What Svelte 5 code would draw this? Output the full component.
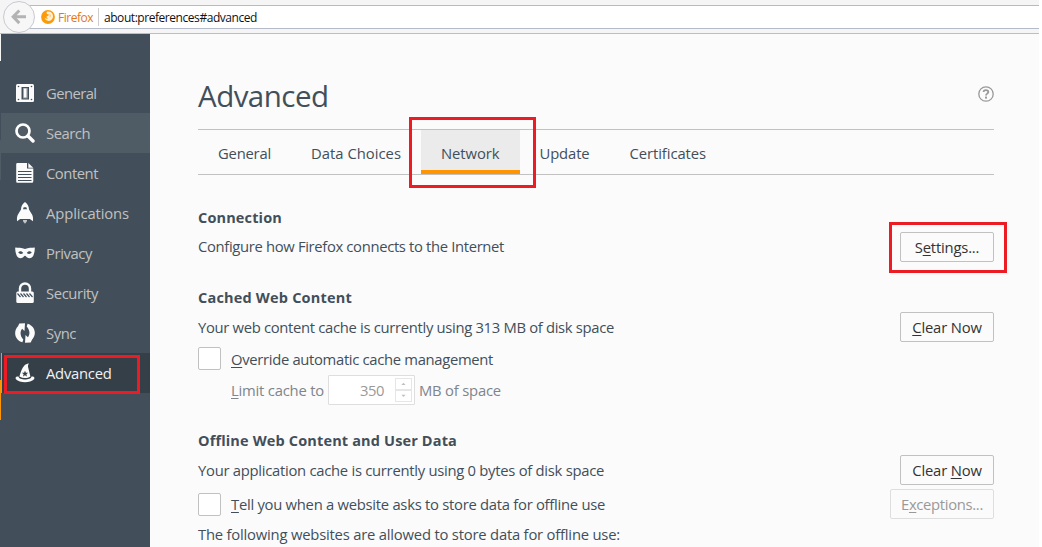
<script>
  const nav = [
    { id: 'general', label: 'General', w: 50.5 },
    { id: 'search', label: 'Search', w: 44 },
    { id: 'content', label: 'Content', w: 52 },
    { id: 'applications', label: 'Applications', w: 83 },
    { id: 'privacy', label: 'Privacy', w: 46 },
    { id: 'security', label: 'Security', w: 52 },
    { id: 'sync', label: 'Sync', w: 30 },
    { id: 'advanced', label: 'Advanced', w: 65.5 }
  ];
  const tabs = [
    { label: 'General', w: 53 },
    { label: 'Data Choices', w: 90 },
    { label: 'Network', w: 58.5 },
    { label: 'Update', w: 50 },
    { label: 'Certificates', w: 76.5 }
  ];

  // Tracks a line of text so that it fills the given width.
  function fit(node, width) {
    const natural = node.getBoundingClientRect().width;
    node.style.letterSpacing = `${(width - natural) / node.textContent.length}px`;
  }
</script>

<div class="window">
  <header class="toolbar">
    <div class="urlbar">
      <svg class="fox" viewBox="0 0 14 14" width="14" height="14">
        <circle cx="7" cy="7" r="6.900" fill="#fb9b0a" />
        <path d="M6 1.700C8.500.900 11.600 2.500 12 5.500c.4 3-1.700 5.400-4.300 5.400-2.100 0-3.800-1.300-4.100-3.300 1 1.300 2.600 1.500 3.600.8-1.100-.2-1.700-.9-1.600-1.900l2-.9.2-1-1.700-.6C5.500 3.300 5.500 2.500 6 1.700z" fill="#fff0d6" />
        <path d="M8.500 3.500c1.300 1 1.500 3 .3 4.200.1-1.500-.1-2.900-.3-4.200z" fill="#f8b04a" />
      </svg>
      <span class="brand" use:fit={35}>Firefox</span>
      <span class="split"></span>
      <span class="url" use:fit={153}>about:preferences#advanced</span>
    </div>
    <div class="back">
      <svg viewBox="0 0 16 16" width="16" height="16">
        <path d="M8.300 1.500L2.200 7.800l6.100 6.300M2.500 7.800H15" fill="none" stroke="#b3b3b3" stroke-width="3" />
      </svg>
    </div>
  </header>

  <div class="page">
    <div class="edge"><i class="e1"></i><i class="e2"></i><i class="e3"></i><i class="e4"></i><i class="e5"></i></div>
    <nav>
      {#each nav as item}
        <div class="item {item.id}">
          <svg viewBox="0 0 20 22" width="20" height="22" fill="#fbfbfb">
            {#if item.id === 'general'}
              <rect x="1" y="2" width="18" height="18" rx="1.500" />
              <path d="M6.500 5h7.500v12.500H6.500z" fill="#424f5a" />
              <path d="M8 6h4.800v10.500H8z" fill="#8c949b" /><path d="M8.800 6.500h2.700v9H8.800z" />
              <g fill="#424f5a"><circle cx="3.500" cy="4.500" r=".8" /><circle cx="16.500" cy="4.500" r=".8" /><circle cx="3.500" cy="17.500" r=".8" /><circle cx="16.500" cy="17.500" r=".8" /></g>
            {:else if item.id === 'search'}
              <circle cx="8" cy="9" r="6.500" fill="none" stroke="#fff" stroke-width="2.700" />
              <path d="M13 14l5 5" stroke="#fff" stroke-width="3.400" stroke-linecap="round" />
            {:else if item.id === 'content'}
              <path d="M2.500 1h9.500v5.500h6.300v12.800a1.500 1.500 0 0 1-1.500 1.500H2.500a1.300 1.300 0 0 1-1.300-1.500V2.300A1.300 1.300 0 0 1 2.500 1z" />
              <path d="M13.300 1l5 4.700h-5z" />
              <path d="M3 9.500h13.500M3 12.500h13.500M3 15.500h13.500M3 18.500h13.500" stroke="#424f5a" stroke-width="1.200" />
            {:else if item.id === 'applications'}
              <path d="M10 0c2.500 1.700 4 4.500 4 7.500l3.300 5.500c.8 2 .9 4 .6 6.200l-3-2.200H5.100l-3 2.200c-.3-2.200-.2-4.200.6-6.200L6 7.500C6 4.500 7.500 1.700 10 0z" />
              <path d="M8 7.300h4l-.7-2H8.700z" fill="#424f5a" />
              <path d="M8 18h4c.3 1.500-1 2.300-2 3.800C9 20.300 7.700 19.500 8 18z" fill="#c4c8cb" /><path d="M7.500 17.500h5" stroke="#424f5a" stroke-width=".6" />
            {:else if item.id === 'privacy'}
              <path d="M.3 5.500c3 .2 6.200.2 9.700 1.400 3.500-1.200 6.700-1.200 9.700-1.400.3 2.600-.2 5.200-1.200 7.700-1.100 3-4.200 3.800-6.300 2.400-1-.7-1.200-1.800-2.200-1.800s-1.200 1.100-2.200 1.800c-2.100 1.400-5.200.6-6.300-2.400C.5 10.700 0 8.100.3 5.500z" />
              <path d="M3.200 10.600c1.400-1.900 3.700-1.700 5 .5-1.600 1.200-3.700 1.200-5-.5zM16.800 10.600c-1.400-1.900-3.700-1.700-5 .5 1.600 1.200 3.700 1.200 5-.5z" fill="#424f5a" />
            {:else if item.id === 'security'}
              <path d="M5 10V6.500a5 5 0 0 1 10 0V10" fill="none" stroke="#fbfbfb" stroke-width="2.400" />
              <rect x="1.300" y="9.500" width="17.500" height="11.500" rx="1.500" />
              <path d="M2.500 11.500l3 3.500M5.500 11.500l3 3.500M8.500 11.500l3 3.500M11.500 11.500l3 3.500M14.500 11.500l3 3.500" stroke="#424f5a" stroke-width="1.200" />
            {:else if item.id === 'sync'}
              <path d="M4.300 1.600L10 1.200 9.500 9 7.100 6.800C4.800 9.800 5 14 8.300 17.600L7.400 20.300C.2 18.200-2.300 10 3 4.300z" />
              <path d="M15.700 20.400L10 20.800l.5-7.800 2.400 2.200c2.300-3 2.100-7.200-1.200-10.800l.9-2.700c7.200 2.100 9.700 10.300 4.400 16z" />
            {:else}
              <path d="M13.800 1.300c-.3 1.200-1 2-.8 3.400l2.400 9.800c-3.500 2-7.500 2-11 0C5.700 10 7 6 9.200 3.700 10.400 2.500 12 2 13.800 1.300z" />
              <path d="M3.700 14.700C.5 14 .2 16 .9 17.300c3.900 4 14.300 4 18.200 0 .7-1.300.4-3.300-2.800-2.600-.2 3.600-12.300 3.600-12.600 0z" />
              <path d="M10 8.700l.9 2h2.200l-1.700 1.500.6 2.200-2-1.200-2 1.200.6-2.200-1.700-1.500h2.200z" fill="#343f48" />
            {/if}
          </svg>
          <span class="fit" use:fit={item.w}>{item.label}</span>
        </div>
      {/each}
      <div class="mark nav-mark"></div>
    </nav>

    <main>
      <div class="title">
        <h1><span class="fit" use:fit={130.5}>Advanced</span></h1>
        <svg viewBox="0 0 16 16" width="16" height="16">
          <circle cx="8" cy="8" r="7.200" fill="none" stroke="#999" stroke-width="1.300" />
          <path d="M5.600 6C5.600 3.500 10.300 3.500 10.300 6.100 10.300 7.700 8 7.600 8 9.500" fill="none" stroke="#999" stroke-width="1.800" />
          <rect x="7" y="10.600" width="2" height="2" fill="#999" />
        </svg>
      </div>

      <div class="tabs">
        {#each tabs as tab}
          <div class="tab" class:active={tab.label === 'Network'}><span class="fit" use:fit={tab.w}>{tab.label}</span></div>
        {/each}
        <div class="mark tab-mark"></div>
      </div>

      <section>
        <h2 class="close"><span class="fit" use:fit={84}>Connection</span></h2>
        <div class="row level">
          <span class="fit" use:fit={306}>Configure how Firefox connects to the Internet</span>
          <div class="holder">
            <button><span class="fit" use:fit={64.5}>S<u>e</u>ttings...</span></button>
            <div class="mark button-mark"></div>
          </div>
        </div>
      </section>

      <section class="cache">
        <h2><span class="fit" use:fit={154}>Cached Web Content</span></h2>
        <div class="row low">
          <span class="fit" use:fit={416}>Your web content cache is currently using 313 MB of disk space</span>
          <button><span class="fit" use:fit={69.5}><u>C</u>lear Now</span></button>
        </div>
        <div class="check first">
          <span class="box"></span>
          <span class="fit" use:fit={262}><u>O</u>verride automatic cache management</span>
        </div>
        <div class="limit">
          <span class="fit" use:fit={93}><u>L</u>imit cache to</span>
          <div class="number">
            <span class="fit" use:fit={24}>350</span>
            <div class="spin">
              <svg viewBox="0 0 17 12" width="17" height="12"><path d="M6 7.200L8.500 4.500l2.500 2.700z" /></svg>
              <svg viewBox="0 0 17 12" width="17" height="12"><path d="M6 4.500l2.500 2.700L11 4.500z" /></svg>
            </div>
          </div>
          <span class="fit" use:fit={82}>MB of space</span>
        </div>
      </section>

      <section>
        <h2 class="close"><span class="fit" use:fit={259}>Offline Web Content and User Data</span></h2>
        <div class="row">
          <span class="fit" use:fit={406}>Your application cache is currently using 0 bytes of disk space</span>
          <button><span class="fit" use:fit={69.5}>Clear <u>N</u>ow</span></button>
        </div>
        <div class="row exceptions">
          <div class="check">
            <span class="box"></span>
            <span class="fit" use:fit={374}><u>T</u>ell you when a website asks to store data for offline use</span>
          </div>
          <button class="disabled"><span class="fit" use:fit={82}>E<u>x</u>ceptions...</span></button>
        </div>
        <p><span class="fit" use:fit={422}>The following websites are allowed to store data for offline use:</span></p>
      </section>
    </main>
  </div>
</div>

<style>
  :global(body) { overflow: hidden; background: #fff; }
  .window { width: 1039px; height: 547px; display: flex; flex-direction: column; overflow: hidden; font: 14.8px/20px "Open Sans", "Noto Sans", sans-serif; color: #424f5a; }
  .window, .window * { box-sizing: border-box; }
  .fit, .brand, .url { display: inline-block; white-space: nowrap; }
  h1, h2, p { margin: 0; }
  .level > .fit { padding-bottom: 2px; }
  u { text-decoration-thickness: 1px; text-underline-offset: 2px; }

  .toolbar { position: relative; flex: none; height: 34px; padding-top: 5px; background: #f5f5f5; border-bottom: 1px solid #bdbec3; }
  .urlbar { height: 24px; margin-left: 18px; padding-left: 23px; background: #fff; border: solid #b5bac9; border-width: 1px 0; display: flex; align-items: center; font-size: 12px; line-height: 22px; }
  .brand { margin: 1px 0 0 3px; color: #e57716; }
  .split { width: 1px; height: 18px; margin: 0 5px; background: #ccc; }
  .url { margin-top: 1px; color: #111; }
  .back { position: absolute; left: 3px; top: 1px; width: 32px; height: 32px; border: 1px solid #c9cad2; border-radius: 50%; background: #f7f7f7; display: flex; align-items: center; justify-content: center; }

  .page { flex: 1; display: flex; min-height: 0; }
  .edge { width: 1px; background: #424f5a; display: flex; flex-direction: column; }
  .edge i { flex: none; }
  .e1 { height: 27px; background: #f5f5f5; }
  .e2 { height: 79px; }
  .e3 { height: 40px; background: #4f5c65; }
  .e4 { height: 200px; }
  .e5 { height: 40px; background: #ff9500; }

  nav { position: relative; flex: none; width: 149px; padding-top: 39px; background: #424f5a; }
  .item { height: 40px; padding-left: 14px; display: flex; align-items: center; gap: 11px; color: #c1c1c1; }
  .search { background: #4f5c65; }
  .advanced { background: #343f48; border-left: 1px solid #ff9500; padding-left: 13px; color: #f2f2f2; }
  .mark { position: absolute; border: 3px solid #ed1c24; }
  .nav-mark { left: 3px; top: 321px; width: 136px; height: 39px; }

  main { flex: 1; min-width: 0; padding: 40px 45px 0 48px; background: #fbfbfb; }
  .title { width: 796px; height: 55px; display: flex; justify-content: space-between; }
  h1 { font-size: 29.5px; font-weight: 400; line-height: 44px; }
  .title svg { margin-top: 12px; }
  .tabs { position: relative; width: 796px; height: 46px; border: solid #c1c1c1; border-width: 1px 0; display: flex; margin-bottom: 33px; }
  .tab { height: 44px; padding: 13px 20px 0; }
  .active { background: #ebebeb; border-bottom: 4px solid #ff9500; }
  .tab-mark { left: 211px; top: -13px; width: 127px; height: 71px; }

  section { width: 796px; margin-bottom: 26px; }
  h2 { font-size: 14.5px; line-height: 20px; font-weight: 700; height: 20px; margin-bottom: 5px; }
  .close { margin-bottom: 4px; }
  .row { display: flex; justify-content: space-between; align-items: center; height: 30px; }
  .low { margin-top: -1px; }
  .holder { position: relative; }
  .button-mark { left: -11px; top: -10px; width: 118px; height: 51px; }
  button { width: 94px; height: 30px; padding: 0; background: #fbfbfb; border: 1px solid #c1c1c1; border-radius: 2px; font: inherit; color: #333; text-align: center; display: flex; justify-content: center; align-items: center; }
  .disabled { width: 104px; border-color: #dedede; color: #999; }
  .check { display: flex; align-items: center; gap: 10px; height: 23px; }
  .first { margin-top: 5px; }
  .box { width: 23px; height: 23px; border: 1px solid #c1c1c1; border-radius: 2px; background: #fff; }
  .limit { display: flex; align-items: center; height: 30px; margin: 5px 0 -1px; padding-left: 33px; color: #7e858c; }
  .number { display: flex; align-items: center; justify-content: flex-end; width: 87px; height: 30px; margin: 0 4px; padding-right: 2px; border: 1px solid #dedede; border-radius: 1px; background: #fff; color: #999; gap: 11px; }
  .spin { display: flex; flex-direction: column; width: 17px; }
  .spin svg { border: 1px solid #e6e6e6; fill: #c0c0c0; }
  .exceptions { margin-top: 4px; }
  .cache { margin-bottom: 27px; }
  p { margin-top: 5px; }
</style>
